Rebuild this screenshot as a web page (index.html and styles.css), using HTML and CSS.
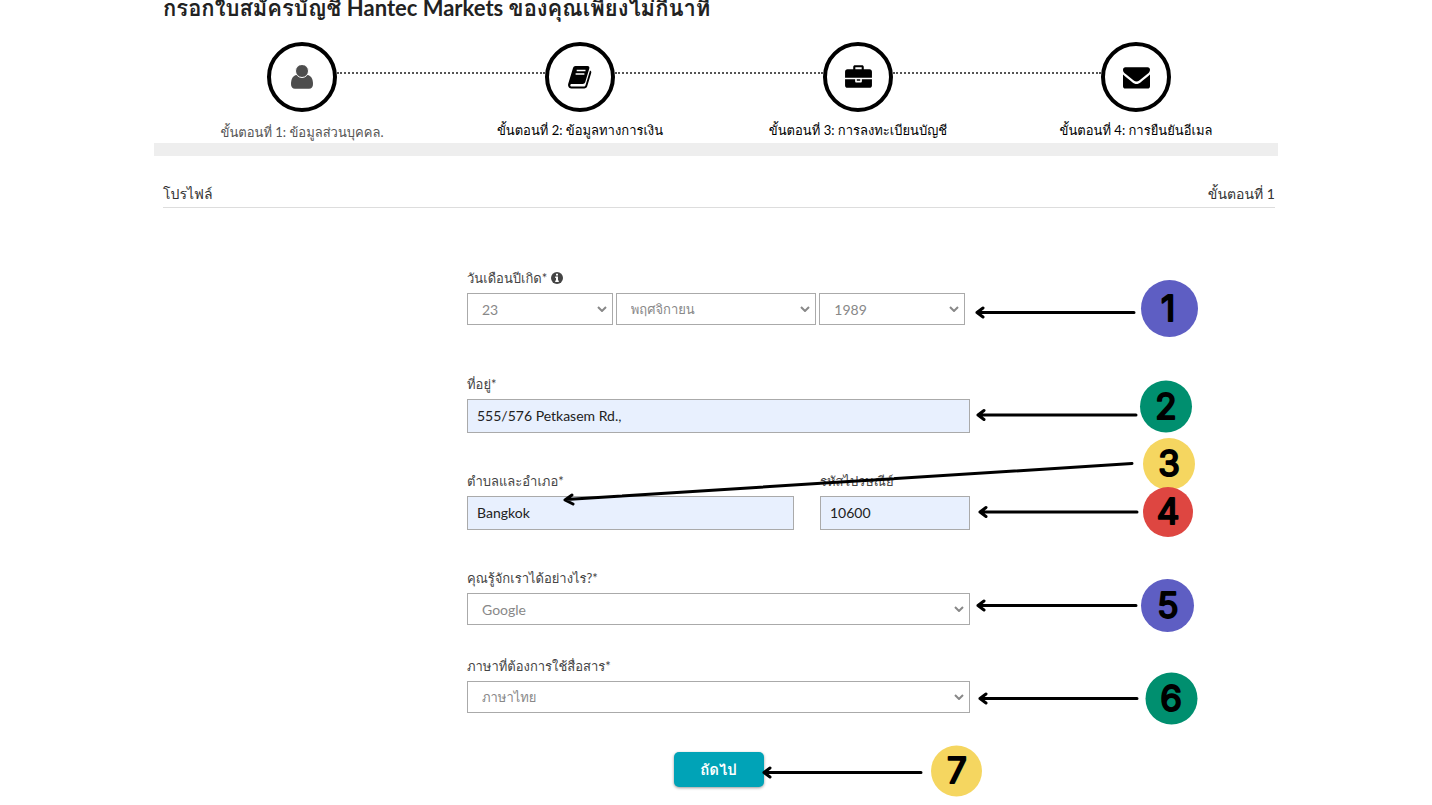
FILE: index.html
```html
<!DOCTYPE html>
<html lang="th">
<head>
<meta charset="utf-8">
<meta name="viewport" content="width=device-width, initial-scale=1">
<title>Hantec Markets</title>
<link rel="stylesheet" href="styles.css">
</head>
<body>
<main class="page">
  <h1 class="title">กรอกใบสมัครบัญชี Hantec Markets ของคุณเพียงไม่กี่นาที</h1>

  <ol class="steps">
    <li class="step step-current">
      <span class="step-circle">
        <svg class="step-icon" viewBox="1 0 22 24" aria-hidden="true"><path d="M6.500 10C3 10.500 1 14 1 19c0 3 1.500 4.800 4 4.800h14c2.500 0 4-1.800 4-4.800 0-5-2-8.500-5.500-9z"/><circle cx="12" cy="6" r="6.500" stroke="#fff"/></svg>
      </span>
      <span class="step-label">ขั้นตอนที่ 1: ข้อมูลส่วนบุคคล.</span>
    </li>
    <li class="step">
      <span class="step-circle">
        <svg class="step-icon" viewBox="0 0 24 24" aria-hidden="true"><path d="M7.500 1h12c1.600 0 2.200 1 1.800 2.500l-4 13.500c-.4 1.300-1.300 2-2.600 2H3.500c-1.500 0-1.700 2.500 0 2.500h12.200c1 0 1.500-.4 1.800-1.300L22 5.500c1.200.6 1.500 1.400 1.200 2.500l-4 13.200c-.4 1.300-1.500 2.200-3 2.200H3.200C.8 23.400-.5 20.700.3 18.500L5 3c.4-1.300 1.300-2 2.500-2z"/><path d="M8.700 5.500h8.800M7.600 9h8.800" stroke="#fff" stroke-width="1.500"/></svg>
      </span>
      <span class="step-label">ขั้นตอนที่ 2: ข้อมูลทางการเงิน</span>
    </li>
    <li class="step">
      <span class="step-circle">
        <svg class="step-icon step-icon-wide" viewBox="0 0 28 25" aria-hidden="true"><path d="M8.500 4.500V2c0-1.100.8-1.800 1.900-1.800h7.200c1.100 0 1.900.7 1.900 1.800v2.500h6C27 4.500 28 5.500 28 7v6.200H0V7c0-1.500 1-2.500 2.500-2.500zm2.200 0h6.600V2.300h-6.600zM0 14.800h10.500v2c0 .8.500 1.300 1.300 1.300h4.400c.8 0 1.300-.5 1.300-1.300v-2H28v6.500c0 1.500-1 2.500-2.500 2.500h-23C1 23.800 0 22.800 0 21.300zM12.200 14.800h3.600v1.700h-3.600z"/></svg>
      </span>
      <span class="step-label">ขั้นตอนที่ 3: การลงทะเบียนบัญชี</span>
    </li>
    <li class="step">
      <span class="step-circle">
        <svg class="step-icon step-icon-wide" viewBox="0 0 28 24" aria-hidden="true"><path d="M2.500 2h23C27 2 28 3 28 4.500c0 1.800-1.300 3.300-2.800 4.500l-8 6.300c-2.400 1.900-4 1.900-6.400 0L2.800 9C1.300 7.800 0 6.300 0 4.700 0 3.200 1 2 2.500 2zM0 9.500c3 2.800 6 5 9.300 7.600 3.500 2.800 5.900 2.800 9.400 0C22 14.500 25 12.300 28 9.500v12c0 1.500-1 2.500-2.500 2.500h-23C1 24 0 23 0 21.500z"/></svg>
      </span>
      <span class="step-label">ขั้นตอนที่ 4: การยืนยันอีเมล</span>
    </li>
  </ol>

  <div class="section-head">
    <h2 class="section-title">โปรไฟล์</h2>
    <span>ขั้นตอนที่ 1</span>
  </div>

  <form class="form">
    <div class="field field-dob">
      <label class="label" for="day">วันเดือนปีเกิด* <svg class="info" viewBox="0 0 12 12" aria-hidden="true"><circle cx="6" cy="6" r="6"/><path d="M5 1.800h2v1.700H5zM4.200 4.600H7V8.600h.8V10H4.200V8.600H5V6h-.8z" fill="#fff"/></svg></label>
      <div class="dob">
        <span class="select-wrap">
          <select class="control select" id="day"><option>23</option></select>
          <svg class="chevron" viewBox="0 0 10 6" aria-hidden="true"><path d="M1 1l4 4 4-4"/></svg>
        </span>
        <span class="select-wrap">
          <select class="control select select-thai" aria-label="เดือน"><option>พฤศจิกายน</option></select>
          <svg class="chevron" viewBox="0 0 10 6" aria-hidden="true"><path d="M1 1l4 4 4-4"/></svg>
        </span>
        <span class="select-wrap">
          <select class="control select" aria-label="ปี"><option>1989</option></select>
          <svg class="chevron" viewBox="0 0 10 6" aria-hidden="true"><path d="M1 1l4 4 4-4"/></svg>
        </span>
      </div>
    </div>

    <div class="field field-text">
      <label class="label" for="address">ที่อยู่*</label>
      <input class="control input" id="address" type="text" value="555/576 Petkasem Rd.,">
    </div>

    <div class="city-row">
      <div class="field field-text">
        <label class="label" for="city">ตำบลและอำเภอ*</label>
        <input class="control input" id="city" type="text" value="Bangkok">
      </div>
      <div class="field field-text">
        <label class="label" for="zip">รหัสไปรษณีย์</label>
        <input class="control input" id="zip" type="text" value="10600">
      </div>
    </div>

    <div class="field field-source">
      <label class="label" for="source">คุณรู้จักเราได้อย่างไร?*</label>
      <span class="select-wrap">
        <select class="control select" id="source"><option>Google</option></select>
        <svg class="chevron" viewBox="0 0 10 6" aria-hidden="true"><path d="M1 1l4 4 4-4"/></svg>
      </span>
    </div>

    <div class="field field-text">
      <label class="label" for="language">ภาษาที่ต้องการใช้สื่อสาร*</label>
      <span class="select-wrap">
        <select class="control select select-thai" id="language"><option>ภาษาไทย</option></select>
        <svg class="chevron" viewBox="0 0 10 6" aria-hidden="true"><path d="M1 1l4 4 4-4"/></svg>
      </span>
    </div>

    <button class="next" type="button">ถัดไป</button>
  </form>

  <svg class="notes" viewBox="154 0 1124 805">
    <g class="arrows">
      <path d="M1134 312.500H977M983 308l-6 4.500 6 4.500"/>
      <path d="M1136 415H978M984 410.500l-6 4.500 6 4.500"/>
      <path d="M1132 463.500L566 499.500M572 495l-7 5 8 4"/>
      <path d="M1137 512H980M986 507.500l-6 4.500 6 4.500"/>
      <path d="M1136 605.500H978M984 601l-6 4.500 6 4.500"/>
      <path d="M1137 698.500H980M986 694l-6 4.500 6 4.500"/>
      <path d="M921 772.500H764M770 768l-6 4.500 6 4.500"/>
    </g>
    <circle class="violet" cx="1169.500" cy="308.500" r="28.500"/>
    <circle class="green" cx="1166" cy="406.500" r="26"/>
    <circle class="yellow" cx="1169" cy="464" r="26"/>
    <circle class="red" cx="1168" cy="512" r="25"/>
    <circle class="violet" cx="1167.500" cy="605.500" r="26.500"/>
    <circle class="green" cx="1171.500" cy="698.500" r="26"/>
    <circle class="yellow" cx="956.500" cy="771" r="25.500"/>
    <g class="digits">
      <text x="1168" y="321">1</text>
      <text x="1166" y="419">2</text>
      <text x="1169" y="476">3</text>
      <text x="1168" y="524">4</text>
      <text x="1168" y="618">5</text>
      <text x="1171" y="711">6</text>
      <text x="957" y="783">7</text>
    </g>
  </svg>
</main>
</body>
</html>
```
FILE: styles.css
```css
* {
  box-sizing: border-box;
}

body {
  margin: 0;
  background: #fff;
  color: #333;
  font-family: Lato, Tahoma, Loma, "Noto Sans Thai Looped", "Droid Sans Thai", Waree, Garuda, "Noto Sans Thai", sans-serif;
  font-size: 14px;
}

.page {
  position: relative;
  max-width: 1124px;
  margin: 0 auto;
}

.title {
  margin: 0 9px;
  color: #222;
  font-size: 22px;
  font-weight: 700;
  line-height: 16px;
  white-space: nowrap;
}

.steps {
  display: grid;
  grid-template-columns: repeat(4, 1fr);
  margin: 0;
  padding: 26px 3px 0 9px;
  border-bottom: 13px solid #eee;
  list-style: none;
}

.step {
  position: relative;
  display: flex;
  flex-direction: column;
  align-items: center;
  height: 101px;
  color: #000;
}

.step:not(:last-child)::after {
  content: "";
  position: absolute;
  top: 30px;
  left: calc(50% + 35px);
  width: calc(100% - 70px);
  border-top: 2px dotted #555;
}

.step-circle {
  display: flex;
  align-items: center;
  justify-content: center;
  width: 70px;
  height: 70px;
  border: 4px solid #000;
  border-radius: 50%;
}

.step-icon {
  width: 26px;
  height: 24px;
}

.step-icon-wide {
  width: 27px;
}

.step-label {
  margin-top: 8px;
  font-size: 13px;
  line-height: 20px;
  white-space: nowrap;
}

.step-current .step-label {
  margin-top: 10px;
  color: #555;
}

.step-current .step-icon {
  width: 22px;
  fill: #4d4d4d;
}

.section-head {
  display: flex;
  justify-content: space-between;
  margin: 25px 3px 0 9px;
  border-bottom: 1px solid #ddd;
  font-size: 14px;
  line-height: 26px;
}

.section-title {
  margin: 0;
  font-size: 14px;
  font-weight: 400;
}

.form {
  display: flex;
  flex-direction: column;
  max-width: 508px;
  margin: 60px auto 0;
  padding-left: 5px;
}

.label {
  display: block;
  height: 25px;
  color: #444;
  font-size: 13px;
  line-height: 20px;
  white-space: nowrap;
}

.info {
  width: 12px;
  height: 12px;
  vertical-align: -1px;
  fill: #444;
}

.control {
  display: block;
  width: 100%;
  margin: 0;
  border: 1px solid #aaa;
  border-radius: 0;
  font: inherit;
  font-size: 14px;
}

.select {
  height: 32px;
  padding: 0 30px 0 14px;
  appearance: none;
  background: #fff;
  color: #888;
}

.select-thai {
  font-size: 13px;
}

.input {
  height: 34px;
  padding: 0 9px 2px;
  background: #e8f0fe;
  color: #222;
}

.select-wrap {
  position: relative;
  display: block;
}

.chevron {
  position: absolute;
  top: 13px;
  right: 6px;
  width: 10px;
  height: 6px;
  fill: none;
  stroke: #888;
  stroke-width: 2;
  pointer-events: none;
}

.dob {
  display: grid;
  grid-template-columns: 146fr 201fr 146fr;
  gap: 3px;
  margin-right: 5px;
}

.field-dob {
  margin-bottom: 49px;
}

.field-text {
  margin-bottom: 38px;
}

.field-source {
  margin-bottom: 31px;
}

.city-row {
  display: grid;
  grid-template-columns: 327fr 150fr;
  gap: 26px;
}

.next {
  align-self: center;
  width: 90px;
  height: 35px;
  margin: 1px 0 16px;
  padding: 0;
  border: 0;
  border-radius: 5px;
  background: #00a3b7;
  box-shadow: 0 1px 3px rgba(0, 0, 0, 0.4);
  color: #fff;
  font: inherit;
  font-size: 15px;
  font-weight: 700;
}

.notes {
  position: absolute;
  top: 0;
  left: 0;
  width: 1124px;
  height: 805px;
  pointer-events: none;
}

.arrows {
  fill: none;
  stroke: #000;
  stroke-width: 3;
  stroke-linecap: round;
  stroke-linejoin: round;
}

.digits {
  font-family: Inter, sans-serif;
  font-size: 35px;
  font-weight: 400;
  text-anchor: middle;
  stroke: #000;
  stroke-width: 2;
  stroke-linejoin: round;
}

.violet {
  fill: #5e5ec3;
}

.green {
  fill: #008f6f;
}

.yellow {
  fill: #f5d660;
}

.red {
  fill: #de4641;
}
```
